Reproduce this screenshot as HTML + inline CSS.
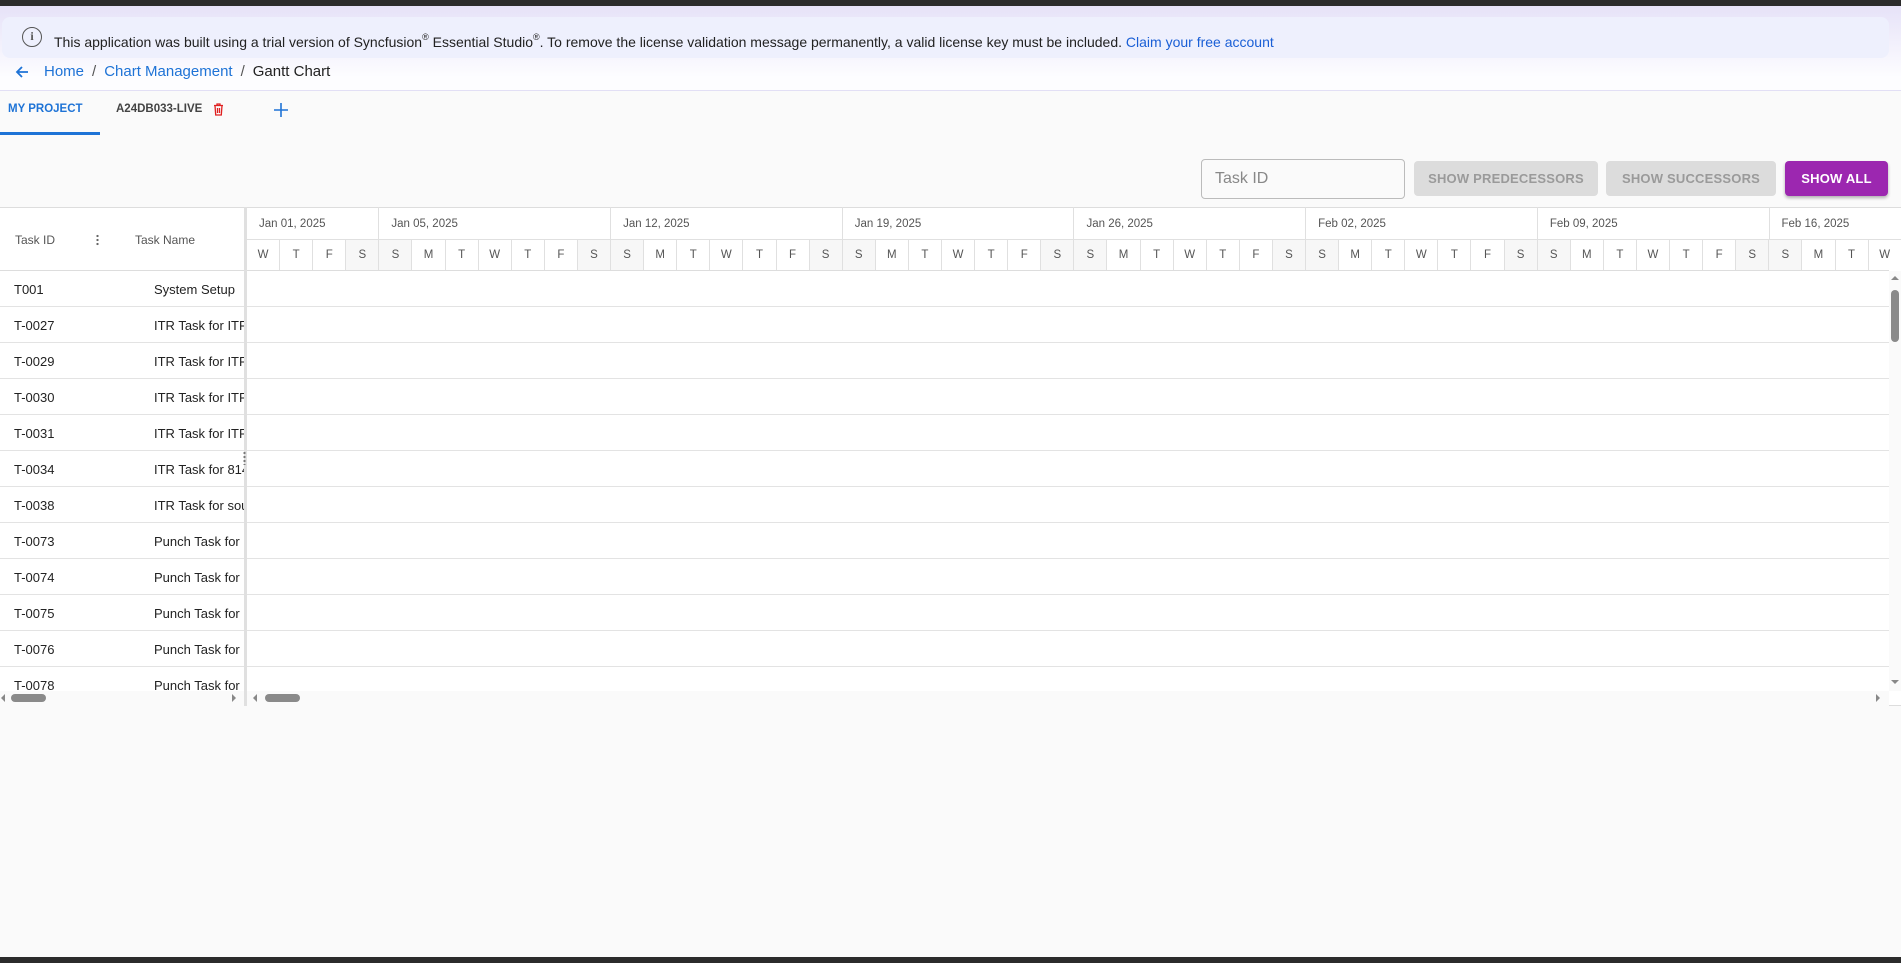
<!DOCTYPE html>
<html><head><meta charset="utf-8"><style>
*{box-sizing:border-box;margin:0;padding:0}
body{width:1901px;height:963px;overflow:hidden;background:#fafafa;font-family:"Liberation Sans",sans-serif;position:relative;color:#222}
.abs{position:absolute}
.top{left:0;top:0;width:1901px;height:6px;background:#2b2b2b}
.bot{left:0;top:957px;width:1901px;height:6px;background:#2b2b2b}
.hdrbg{left:0;top:6px;width:1901px;height:85px;background:linear-gradient(#e6e2f8,#fdfdff 85%);border-bottom:1px solid #e2dff5}
.banner{left:2px;top:17px;width:1887px;height:41px;background:#eef0fd;border-radius:8px;font-size:14px;line-height:41px;padding-left:52px;color:#222}
.banner sup{font-size:9px;vertical-align:7px}
.banner a{color:#1a5fd6}
.info{left:20px;top:10px;width:20px;height:20px;border:1.6px solid #555;border-radius:50%;font-size:12px;line-height:17px;text-align:center;color:#555;font-family:"Liberation Serif",serif;font-weight:bold}
.bc{top:62px;left:44px;font-size:15px;line-height:20px;color:#1e73d6}
.bc span.sep{color:#555;margin:0 8px}
.bc span.cur{color:#222}
.tab{top:103px;font-size:11.5px;font-weight:bold;letter-spacing:0}
.gbox{left:0;top:207px;width:1901px;height:499px;background:#fff;border-top:1px solid #ddd;border-bottom:1px solid #ddd}
.btn{height:35px;top:161px;border-radius:4px;font-size:13px;font-weight:bold;line-height:35px;text-align:center;letter-spacing:.2px}
.row{position:absolute;left:0;width:1889px;height:36px;border-bottom:1px solid #e3e3e3;font-size:13px;line-height:38px}
.row .a{position:absolute;left:14px}
.row .b{position:absolute;left:154px;width:90px;overflow:hidden;white-space:nowrap}
.days{position:absolute;left:247px;top:239px;height:31px;display:flex;border-top:1px solid #e0e0e0}
.days div{width:33.1px;flex:none;border-right:1px solid #e0e0e0;font-size:11.5px;color:#555;text-align:center;line-height:31px}
.days div.w{background:#f7f7f7}
.wks{position:absolute;left:247px;top:207px;height:32px;display:flex}
.wks div{flex:none;border-right:1px solid #e0e0e0;font-size:11.5px;color:#555;line-height:34px;padding-left:12px}
</style></head><body>
<div class="abs top"></div>
<div class="abs hdrbg"></div>
<div class="abs banner"><div class="abs info">i</div>This application was built using a trial version of Syncfusion<sup>®</sup> Essential Studio<sup>®</sup>. To remove the license validation message permanently, a valid license key must be included. <a>Claim your free account</a></div>
<svg class="abs" style="left:14px;top:64px" width="16" height="16" viewBox="0 0 16 16"><path d="M14 8H3M8 3L3 8l5 5" stroke="#1e73d6" stroke-width="1.8" fill="none"/></svg>
<div class="abs bc">Home<span class="sep">/</span>Chart Management<span class="sep">/</span><span class="cur">Gantt Chart</span></div>
<div class="abs tab" style="left:8px;color:#1e73d6">MY PROJECT</div>
<div class="abs tab" style="left:116px;color:#444">A24DB033-LIVE</div>
<svg class="abs" style="left:213px;top:103px" width="11" height="13" viewBox="0 0 11 13"><path d="M1 2.5h9M4 2.5V1h3v1.5M2 2.5l.7 9.5h5.6L9 2.5M4.5 5v5M6.5 5v5" stroke="#e02020" stroke-width="1.3" fill="none"/></svg>
<svg class="abs" style="left:273px;top:102px" width="16" height="16"><path d="M8 1v14M1 8h14" stroke="#1e73d6" stroke-width="1.6"/></svg>
<div class="abs" style="left:0;top:132px;width:100px;height:3px;background:#1e73d6"></div>
<div class="abs" style="left:1201px;top:159px;width:204px;height:40px;border:1px solid #bbb;border-radius:4px;font-size:16px;color:#888;line-height:38px;padding-left:13px">Task ID</div>
<div class="abs btn" style="left:1414px;width:184px;background:#dcdcdc;color:#9a9a9a">SHOW PREDECESSORS</div>
<div class="abs btn" style="left:1606px;width:170px;background:#dcdcdc;color:#9a9a9a">SHOW SUCCESSORS</div>
<div class="abs btn" style="left:1785px;width:103px;background:#9c27b0;color:#fff;box-shadow:0 2px 3px rgba(0,0,0,.3)">SHOW ALL</div>
<div class="abs gbox"></div>
<div class="abs" style="left:15px;top:233px;font-size:12px;color:#555">Task ID</div>
<div class="abs" style="left:96px;top:234px;width:3px;height:12px;background:radial-gradient(circle,#666 1px,transparent 1.3px) 0 0/3px 4px"></div>
<div class="abs" style="left:135px;top:233px;font-size:12px;color:#555">Task Name</div>
<div class="wks"><div style="width:132.4px">Jan 01, 2025</div><div style="width:231.7px">Jan 05, 2025</div><div style="width:231.7px">Jan 12, 2025</div><div style="width:231.7px">Jan 19, 2025</div><div style="width:231.7px">Jan 26, 2025</div><div style="width:231.7px">Feb 02, 2025</div><div style="width:231.7px">Feb 09, 2025</div><div style="width:231.7px">Feb 16, 2025</div></div>
<div class="days"><div>W</div><div>T</div><div>F</div><div class="w">S</div><div class="w">S</div><div>M</div><div>T</div><div>W</div><div>T</div><div>F</div><div class="w">S</div><div class="w">S</div><div>M</div><div>T</div><div>W</div><div>T</div><div>F</div><div class="w">S</div><div class="w">S</div><div>M</div><div>T</div><div>W</div><div>T</div><div>F</div><div class="w">S</div><div class="w">S</div><div>M</div><div>T</div><div>W</div><div>T</div><div>F</div><div class="w">S</div><div class="w">S</div><div>M</div><div>T</div><div>W</div><div>T</div><div>F</div><div class="w">S</div><div class="w">S</div><div>M</div><div>T</div><div>W</div><div>T</div><div>F</div><div class="w">S</div><div class="w">S</div><div>M</div><div>T</div><div>W</div></div>
<div class="abs" style="left:0;top:270px;width:1889px;height:1px;background:#ddd"></div>
<div class="abs" style="left:0;top:271px;width:1889px;height:420px;overflow:hidden">
<div class="row" style="top:0"><span class="a">T001</span><span class="b">System Setup</span></div>
<div class="row" style="top:36px"><span class="a">T-0027</span><span class="b">ITR Task for ITR</span></div>
<div class="row" style="top:72px"><span class="a">T-0029</span><span class="b">ITR Task for ITR</span></div>
<div class="row" style="top:108px"><span class="a">T-0030</span><span class="b">ITR Task for ITR</span></div>
<div class="row" style="top:144px"><span class="a">T-0031</span><span class="b">ITR Task for ITR</span></div>
<div class="row" style="top:180px"><span class="a">T-0034</span><span class="b">ITR Task for 814</span></div>
<div class="row" style="top:216px"><span class="a">T-0038</span><span class="b">ITR Task for sou</span></div>
<div class="row" style="top:252px"><span class="a">T-0073</span><span class="b">Punch Task for</span></div>
<div class="row" style="top:288px"><span class="a">T-0074</span><span class="b">Punch Task for</span></div>
<div class="row" style="top:324px"><span class="a">T-0075</span><span class="b">Punch Task for</span></div>
<div class="row" style="top:360px"><span class="a">T-0076</span><span class="b">Punch Task for</span></div>
<div class="row" style="top:396px"><span class="a">T-0078</span><span class="b">Punch Task for</span></div>
</div>
<div class="abs" style="left:0;top:691px;width:1889px;height:15px;background:#fafafa"></div>
<div class="abs" style="left:244px;top:207px;width:3px;height:499px;background:#e0e0e0"></div>
<div class="abs" style="left:243px;top:451px;width:3px;height:14px;background:radial-gradient(circle,#777 1px,transparent 1.3px) 0 0/3px 4px"></div>
<div class="abs" style="left:11px;top:694px;width:35px;height:8px;border-radius:4px;background:#8a8a8a"></div>
<div class="abs" style="left:265px;top:694px;width:35px;height:8px;border-radius:4px;background:#8a8a8a"></div>
<div class="abs" style="left:1px;top:694px;width:0;height:0;border:4px solid transparent;border-right-color:#888;border-left:0"></div>
<div class="abs" style="left:232px;top:694px;width:0;height:0;border:4px solid transparent;border-left-color:#888;border-right:0"></div>
<div class="abs" style="left:253px;top:694px;width:0;height:0;border:4px solid transparent;border-right-color:#888;border-left:0"></div>
<div class="abs" style="left:1876px;top:694px;width:0;height:0;border:4px solid transparent;border-left-color:#888;border-right:0"></div>
<div class="abs" style="left:1889px;top:271px;width:12px;height:420px;background:#fafafa"></div>
<div class="abs" style="left:1891px;top:276px;width:0;height:0;border:4px solid transparent;border-bottom-color:#888;border-top:0"></div>
<div class="abs" style="left:1891px;top:680px;width:0;height:0;border:4px solid transparent;border-top-color:#888;border-bottom:0"></div>
<div class="abs" style="left:1891px;top:290px;width:8px;height:52px;border-radius:4px;background:#8a8a8a"></div>
<div class="abs bot"></div>
</body></html>
